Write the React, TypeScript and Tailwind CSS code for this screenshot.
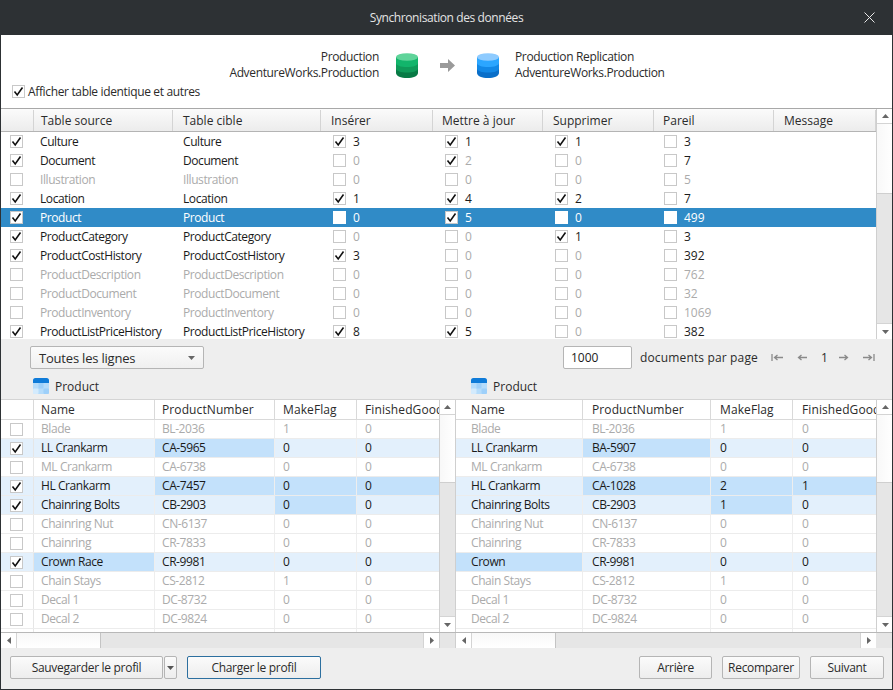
import React from "react";

type Num = [boolean, number | string, boolean];
type Row = { n: string; c: boolean; dim: boolean; sel?: boolean; ins: Num; upd: Num; del: Num; same: Num };
const b = (chk: boolean, v: number | string, active: boolean): Num => [chk, v, active];

const rows: Row[] = [
  { n: "Culture", c: true, dim: false, ins: b(true, 3, true), upd: b(true, 1, true), del: b(true, 1, true), same: b(false, 3, true) },
  { n: "Document", c: true, dim: false, ins: b(false, 0, false), upd: b(true, 2, false), del: b(false, 0, false), same: b(false, 7, true) },
  { n: "Illustration", c: false, dim: true, ins: b(false, 0, false), upd: b(false, 0, false), del: b(false, 0, false), same: b(false, 5, false) },
  { n: "Location", c: true, dim: false, ins: b(true, 1, true), upd: b(true, 4, true), del: b(true, 2, true), same: b(false, 7, true) },
  { n: "Product", c: true, dim: false, sel: true, ins: b(false, 0, true), upd: b(true, 5, true), del: b(false, 0, true), same: b(false, 499, true) },
  { n: "ProductCategory", c: true, dim: false, ins: b(false, 0, false), upd: b(false, 0, false), del: b(true, 1, true), same: b(false, 3, true) },
  { n: "ProductCostHistory", c: true, dim: false, ins: b(true, 3, true), upd: b(false, 0, false), del: b(false, 0, false), same: b(false, 392, true) },
  { n: "ProductDescription", c: false, dim: true, ins: b(false, 0, false), upd: b(false, 0, false), del: b(false, 0, false), same: b(false, 762, false) },
  { n: "ProductDocument", c: false, dim: true, ins: b(false, 0, false), upd: b(false, 0, false), del: b(false, 0, false), same: b(false, 32, false) },
  { n: "ProductInventory", c: false, dim: true, ins: b(false, 0, false), upd: b(false, 0, false), del: b(false, 0, false), same: b(false, 1069, false) },
  { n: "ProductListPriceHistory", c: true, dim: false, ins: b(true, 8, true), upd: b(true, 5, true), del: b(false, 0, false), same: b(false, 382, true) },
];

type DRow = { v: (string | number)[]; on: boolean; hi: number[]; c: boolean };
const left: DRow[] = [
  { v: ["Blade", "BL-2036", 1, 0], on: false, hi: [], c: false },
  { v: ["LL Crankarm", "CA-5965", 0, 0], on: true, hi: [1], c: true },
  { v: ["ML Crankarm", "CA-6738", 0, 0], on: false, hi: [], c: false },
  { v: ["HL Crankarm", "CA-7457", 0, 0], on: true, hi: [1, 2, 3], c: true },
  { v: ["Chainring Bolts", "CB-2903", 0, 0], on: true, hi: [2], c: true },
  { v: ["Chainring Nut", "CN-6137", 0, 0], on: false, hi: [], c: false },
  { v: ["Chainring", "CR-7833", 0, 0], on: false, hi: [], c: false },
  { v: ["Crown Race", "CR-9981", 0, 0], on: true, hi: [0], c: true },
  { v: ["Chain Stays", "CS-2812", 1, 0], on: false, hi: [], c: false },
  { v: ["Decal 1", "DC-8732", 0, 0], on: false, hi: [], c: false },
  { v: ["Decal 2", "DC-9824", 0, 0], on: false, hi: [], c: false },
  { v: ["", "", "", ""], on: false, hi: [], c: false },
];
const right: DRow[] = [
  { v: ["Blade", "BL-2036", 1, 0], on: false, hi: [], c: false },
  { v: ["LL Crankarm", "BA-5907", 0, 0], on: true, hi: [1], c: true },
  { v: ["ML Crankarm", "CA-6738", 0, 0], on: false, hi: [], c: false },
  { v: ["HL Crankarm", "CA-1028", 2, 1], on: true, hi: [1, 2, 3], c: true },
  { v: ["Chainring Bolts", "CB-2903", 1, 0], on: true, hi: [2], c: true },
  { v: ["Chainring Nut", "CN-6137", 0, 0], on: false, hi: [], c: false },
  { v: ["Chainring", "CR-7833", 0, 0], on: false, hi: [], c: false },
  { v: ["Crown", "CR-9981", 0, 0], on: true, hi: [0], c: true },
  { v: ["Chain Stays", "CS-2812", 1, 0], on: false, hi: [], c: false },
  { v: ["Decal 1", "DC-8732", 0, 0], on: false, hi: [], c: false },
  { v: ["Decal 2", "DC-9824", 0, 0], on: false, hi: [], c: false },
  { v: ["", "", "", ""], on: false, hi: [], c: false },
];

function Check({ on, plain }: { on: boolean; plain?: boolean }) {
  return (
    <span className={"flex h-[13px] w-[13px] shrink-0 items-center justify-center bg-white " + (plain ? "" : "border border-[#c8c8c8]")}>
      {on && (
        <svg width="11" height="11" viewBox="0 0 11 11" fill="none">
          <path d="M1.5 5.6 L4.2 9 L9.5 1.5" stroke="#111" strokeWidth="1.6" />
        </svg>
      )}
    </span>
  );
}

function NumCell({ d, w, sel }: { d: Num; w: string; sel?: boolean }) {
  return (
    <div className={"flex shrink-0 items-center " + w}>
      <Check on={d[0]} plain={sel && !d[0]} />
      <span className={"ml-[7px] tracking-normal " + (sel ? "text-white" : d[2] ? "text-[#1c1c1c]" : "text-[#ababab]")}>{d[1]}</span>
    </div>
  );
}

function Arrow({ dir, dark }: { dir: "u" | "d" | "l" | "r"; dark?: boolean }) {
  const p = { u: "M0 4 L3.5 0 L7 4 Z", d: "M0 0 L7 0 L3.5 4 Z", l: "M4 0 L4 7 L0 3.5 Z", r: "M0 0 L0 7 L4 3.5 Z" }[dir];
  const vert = dir === "u" || dir === "d";
  return (
    <svg width={vert ? 7 : 4} height={vert ? 4 : 7} viewBox={vert ? "0 0 7 4" : "0 0 4 7"}>
      <path d={p} fill={dark ? "#555" : "#666"} />
    </svg>
  );
}

function VScroll({ thumb, rest, border }: { thumb: string; rest: string; border: string }) {
  return (
    <div className={"flex w-[17px] shrink-0 flex-col bg-[#e6e6e6] " + border}>
      <div className="flex h-[15px] shrink-0 items-center justify-center border-b border-[#d4d4d4] bg-white"><Arrow dir="u" /></div>
      <div className={"shrink-0 border-b border-[#cfcfcf] bg-gradient-to-r from-[#f8f8f8] to-white " + thumb} />
      <div className={"min-h-0 " + rest} />
      <div className="flex h-[16px] shrink-0 items-center justify-center border-t border-[#d4d4d4] bg-white"><Arrow dir="d" /></div>
    </div>
  );
}

function pad(withCheck: boolean, i: number) {
  if (withCheck) return i < 2 ? "pl-[7px]" : "pl-[8px]";
  return i === 0 ? "pl-[15px]" : "pl-[9px]";
}

function DataTable({ rowsData, withCheck, cols, head }: { rowsData: DRow[]; withCheck: boolean; cols: string[]; head: string[] }) {
  return (
    <div className="flex h-full min-w-0 flex-col overflow-hidden">
      <div className="flex h-[20px] shrink-0 items-center border-b border-[#d9d9d9] bg-white text-[#2b2b2b]">
        {withCheck && <div className="h-full w-[33px] shrink-0 border-r border-[#d9d9d9]" />}
        {head.map((h, i) => (
          <div key={h} className={"flex h-full shrink-0 items-center overflow-hidden whitespace-nowrap border-r border-[#d9d9d9] tracking-[0.1px] " + cols[i] + (i === 3 ? " border-r-0" : "")}>
            <span className={pad(withCheck, i)}>{h}</span>
          </div>
        ))}
      </div>
      {rowsData.map((r, ri) => (
        <div key={ri} className={"flex h-[19px] shrink-0 border-b border-[#ececec] tracking-[-0.42px] " + (r.on ? "bg-[#e3f0fc] text-[#1a1a1a]" : "bg-white text-[#ababab]")}>
          {withCheck && (
            <div className="flex h-full w-[33px] shrink-0 items-center justify-center border-r border-[#e6e6e6] pr-[1px]">
              <Check on={r.c} />
            </div>
          )}
          {r.v.map((c, i) => (
            <div key={i} className={"flex h-full shrink-0 items-center whitespace-nowrap border-r border-[#eeeeee] " + cols[i] + (r.hi.includes(i) ? " bg-[#c3e1fb]" : "") + (i === 3 ? " border-r-0" : "")}>
              <span className={pad(withCheck, i)}>{c}</span>
            </div>
          ))}
        </div>
      ))}
    </div>
  );
}

function HBar({ track }: { track: string }) {
  return (
    <div className="flex h-[15px] shrink-0 bg-[#e6e6e6]">
      <div className="flex w-[16px] shrink-0 items-center justify-center border-r border-[#d4d4d4] bg-white"><Arrow dir="l" /></div>
      <div className="w-[84px] shrink-0 border-r border-[#c4c4c4] bg-gradient-to-b from-[#f8f8f8] to-white" />
      <div className={track} />
      <div className="flex w-[16px] shrink-0 items-center justify-center border-l border-[#d4d4d4] bg-white"><Arrow dir="r" /></div>
    </div>
  );
}

function Cyl({ top, mid, mid2, low }: { top: string; mid: string; mid2: string; low: string }) {
  return (
    <svg width="22" height="25" viewBox="0 0 22 25">
      <path d="M0 4 V20 C0 23 5 25 11 25 C17 25 22 23 22 20 V4 Z" fill={low} />
      <path d="M0 4 V15.5 C0 18 5 19.5 11 19.5 C17 19.5 22 18 22 15.5 V4 Z" fill={mid2} />
      <path d="M0 4 V10 C0 12.5 5 14 11 14 C17 14 22 12.5 22 10 V4 Z" fill={mid} />
      <ellipse cx="11" cy="4" rx="11" ry="3.8" fill={top} />
    </svg>
  );
}

function TableIcon() {
  return (
    <svg width="16" height="16" viewBox="0 0 16 16">
      <rect x="0" y="0" width="16" height="16" rx="2.5" fill="#b5dcfb" />
      <path d="M0 5 V2.5 A2.5 2.5 0 0 1 2.5 0 H13.5 A2.5 2.5 0 0 1 16 2.5 V5 Z" fill="#0f7bd8" />
      <rect x="5.5" y="5" width="5" height="5.5" fill="#9ed0fa" />
      <rect x="0" y="10.5" width="5.5" height="5.5" fill="#d4ebfd" rx="1" />
      <rect x="10.5" y="10.5" width="5.5" height="5.5" fill="#9ed0fa" rx="1" />
    </svg>
  );
}

function Btn({ children, w, focus }: { children: React.ReactNode; w: string; focus?: boolean }) {
  return (
    <div className={"flex h-[23px] shrink-0 items-center justify-center rounded-[2px] border bg-gradient-to-b from-[#fbfbfb] to-[#ededed] text-[#2b2b2b] tracking-[-0.3px] " + w + (focus ? " border-[#2c6f9f]" : " border-[#b5b5b5]")}>
      {children}
    </div>
  );
}

function Nav({ kind }: { kind: "first" | "prev" | "next" | "last" }) {
  const edge = kind === "first" || kind === "last";
  const d = {
    first: "M1 1 V8 M12 4.5 H3.5 M6.5 2 L3.5 4.5 L6.5 7",
    prev: "M10 4.5 H1.5 M4.5 2 L1.5 4.5 L4.5 7",
    next: "M0 4.5 H8.5 M5.5 2 L8.5 4.5 L5.5 7",
    last: "M11 1 V8 M0 4.5 H8.5 M5.5 2 L8.5 4.5 L5.5 7",
  }[kind];
  return (
    <svg width={edge ? 12 : 10} height="9" viewBox={edge ? "0 0 12 9" : "0 0 10 9"} fill="none">
      <path d={d} stroke="#8a8a8a" strokeWidth="1.3" />
    </svg>
  );
}

const leftCols = ["w-[121px]", "w-[120px]", "w-[82px]", "w-[83px]"];
const rightCols = ["w-[127px]", "w-[128px]", "w-[82px]", "w-[83px]"];
const head = ["Name", "ProductNumber", "MakeFlag", "FinishedGoods"];
const mainCols = ["w-[139px] pl-[7px]", "w-[148px] pl-[10px]", "w-[112px] pl-[10px]", "w-[110px] pl-[9px]", "w-[111px] pl-[10px]", "w-[120px] pl-[9px]", "w-[102px] pl-[10px]"];

export default function App() {
  return (
    <div className="flex h-[690px] w-[893px] flex-col overflow-hidden border-x border-b border-[#2d3134] bg-[#eeeeee] font-['Open_Sans','Noto_Sans',sans-serif] text-[12px] leading-none">
      <div className="-mx-px flex h-[35px] shrink-0 items-center justify-center bg-[#2d3134] text-[#e4e4e4] relative">
        <span className="tracking-[-0.4px]">Synchronisation des données</span>
        <svg className="absolute right-[18px] top-[12px]" width="11" height="11" viewBox="0 0 11 11" fill="none">
          <path d="M0.5 0.5 L10.5 10.5 M10.5 0.5 L0.5 10.5" stroke="#e8e8e8" strokeWidth="1" />
        </svg>
      </div>

      <div className="flex h-[73px] shrink-0 flex-col bg-white text-[#2b2b2b] tracking-[-0.35px]">
        <div className="mt-[14px] flex h-[32px] items-center">
          <div className="flex w-[378px] flex-col items-end gap-[4px] leading-[12px]">
            <span>Production</span>
            <span>AdventureWorks.Production</span>
          </div>
          <div className="ml-[17px] flex h-[25px] items-center"><Cyl top="#5fd49a" mid="#12b56b" mid2="#0f9a59" low="#087a45" /></div>
          <svg className="ml-[22px]" width="15" height="13" viewBox="0 0 15 13">
            <path d="M0 4 H8 V0 L15 6.5 L8 13 V9 H0 Z" fill="#9a9a9a" />
          </svg>
          <div className="ml-[22px] flex h-[25px] items-center"><Cyl top="#8ecbff" mid="#2ba6ff" mid2="#1288e6" low="#0a6fc9" /></div>
          <div className="ml-[16px] flex flex-col gap-[4px] leading-[12px]">
            <span>Production Replication</span>
            <span>AdventureWorks.Production</span>
          </div>
        </div>
        <div className="ml-[11px] mt-[4px] flex items-center gap-[3px]">
          <Check on />
          <span>Afficher table identique et autres</span>
        </div>
      </div>

      <div className="flex h-[231px] shrink-0 border-t border-[#a8a8a8] bg-white">
        <div className="flex w-[875px] shrink-0 flex-col overflow-hidden">
          <div className="flex h-[23px] shrink-0 items-center border-b border-[#b4b4b4] bg-gradient-to-b from-[#fbfbfb] to-[#ececec] pt-px text-[#2b2b2b]">
            <div className="h-full w-[33px] shrink-0 border-r border-[#d4d4d4]" />
            {["Table source", "Table cible", "Insérer", "Mettre à jour", "Supprimer", "Pareil", "Message"].map((h, i) => (
              <div key={h} className={"flex h-full shrink-0 items-center border-r border-[#d4d4d4] " + mainCols[i]}>{h}</div>
            ))}
          </div>
          {rows.map((r) => (
            <div key={r.n} className={"flex h-[19px] shrink-0 items-center tracking-[-0.42px] " + (r.sel ? "bg-[#308bc7] text-white" : r.dim ? "bg-white text-[#ababab]" : "bg-white text-[#1a1a1a]")}>
              <div className="flex w-[32px] shrink-0 justify-center pr-[1px]"><Check on={r.c} /></div>
              <div className="w-[150px] shrink-0 pl-[7px]">{r.n}</div>
              <div className="w-[150px] shrink-0">{r.n}</div>
              <NumCell d={r.ins} w="w-[112px]" sel={r.sel} />
              <NumCell d={r.upd} w="w-[110px]" sel={r.sel} />
              <NumCell d={r.del} w="w-[109px]" sel={r.sel} />
              <NumCell d={r.same} w="w-[110px]" sel={r.sel} />
            </div>
          ))}
        </div>
        <VScroll thumb="h-[70px]" rest="flex-1" border="border-l border-[#cfcfcf]" />
      </div>

      <div className="flex h-[60px] shrink-0 flex-col">
        <div className="mt-[7px] flex h-[23px] items-center">
          <div className="ml-[29px] flex h-[23px] w-[174px] items-center justify-between rounded-[2px] border border-[#b5b5b5] bg-gradient-to-b from-[#fbfbfb] to-[#f0f0f0] pl-[8px] pr-[8px] pt-px text-[13px] tracking-[-0.2px] text-[#2b2b2b]">
            <span>Toutes les lignes</span>
            <svg width="7" height="4" viewBox="0 0 7 4"><path d="M0 0 H7 L3.5 4 Z" fill="#666" /></svg>
          </div>
          <div className="ml-[359px] flex h-[23px] w-[69px] items-center rounded-[2px] border border-[#b5b5b5] bg-white pl-[7px] text-[12px] text-[#1a1a1a]">1000</div>
          <span className="ml-[8px] tracking-[0.15px] text-[#2b2b2b]">documents par page</span>
          <div className="ml-[13px] flex items-center gap-[14px] text-[#2b2b2b]">
            <Nav kind="first" />
            <Nav kind="prev" />
            <span className="w-[4px]">1</span>
            <Nav kind="next" />
            <Nav kind="last" />
          </div>
        </div>
        <div className="mt-[9px] flex h-[16px] items-center text-[#2b2b2b]">
          <div className="ml-[32px] flex items-center gap-[6px]"><TableIcon /><span className="pt-[2px]">Product</span></div>
          <div className="ml-[372px] flex items-center gap-[6px]"><TableIcon /><span className="pt-[2px]">Product</span></div>
        </div>
      </div>

      <div className="flex h-[249px] shrink-0 flex-col border-t border-[#d4d4d4]">
        <div className="flex h-[232px] shrink-0 bg-white">
          <div className="w-[438px] shrink-0 overflow-hidden"><DataTable rowsData={left} withCheck cols={leftCols} head={head} /></div>
          <VScroll thumb="h-[68px]" rest="flex-1" border="border-x border-[#cfcfcf]" />
          <div className="w-[420px] shrink-0 overflow-hidden"><DataTable rowsData={right} withCheck={false} cols={rightCols} head={head} /></div>
          <VScroll thumb="h-[68px]" rest="flex-1" border="border-l border-[#cfcfcf]" />
        </div>
        <div className="flex h-[17px] shrink-0 border-y border-[#b8b8b8] bg-[#e6e6e6]">
          <div className="w-[438px] shrink-0"><HBar track="flex-1" /></div>
          <div className="w-[17px] shrink-0 border-x border-[#cfcfcf]" />
          <div className="w-[420px] shrink-0"><HBar track="flex-1" /></div>
        </div>
      </div>

      <div className="flex h-[41px] shrink-0 items-start bg-[#eeeeee] pt-[8px] text-[#2b2b2b]">
        <div className="ml-[9px] flex">
          <Btn w="w-[153px]">Sauvegarder le profil</Btn>
          <div className="ml-[1px] flex h-[23px] w-[13px] items-center justify-center rounded-[2px] border border-[#b5b5b5] bg-gradient-to-b from-[#fbfbfb] to-[#ededed]">
            <svg width="7" height="4" viewBox="0 0 7 4"><path d="M0 0 H7 L3.5 4 Z" fill="#555" /></svg>
          </div>
        </div>
        <div className="ml-[10px]"><Btn w="w-[134px]" focus>Charger le profil</Btn></div>
        <div className="ml-[318px]"><Btn w="w-[73px]">Arrière</Btn></div>
        <div className="ml-[10px]"><Btn w="w-[78px]">Recomparer</Btn></div>
        <div className="ml-[10px]"><Btn w="w-[74px]">Suivant</Btn></div>
      </div>
    </div>
  );
}
